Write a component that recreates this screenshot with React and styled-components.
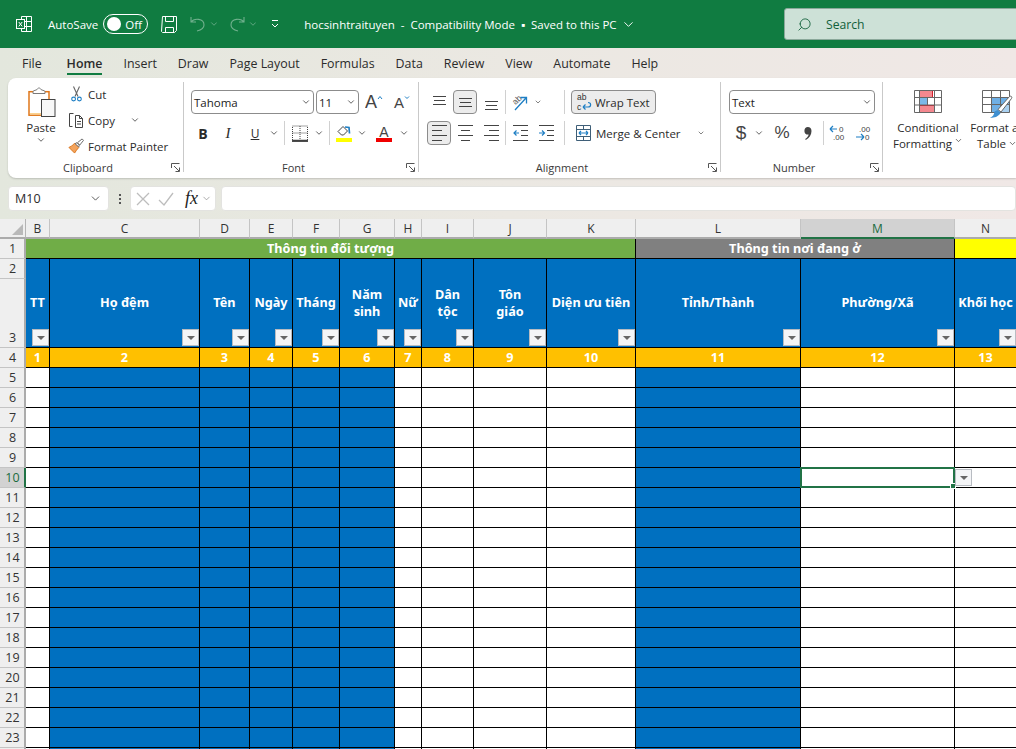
import React from 'react';
import styled, { createGlobalStyle } from 'styled-components';
import { ChevronDown, Search as SearchIcon } from 'lucide-react';

const UI_FONT = '"Open Sans", "Noto Sans", sans-serif';
const CELL_FONT = '"Noto Sans", "DejaVu Sans", sans-serif';
const ICON_FONT = '"Liberation Sans", sans-serif';
const BLUE = '#1f7fc4';

const Global = createGlobalStyle`
  html, body { margin: 0; padding: 0; height: 100%; overflow: hidden; }
  #root { height: 100%; }
`;

const Page = styled.div`
  width: 1016px;
  height: 749px;
  overflow: hidden;
  display: flex;
  flex-direction: column;
  font-family: ${UI_FONT};
  font-size: 12px;
  color: #2b2b2b;
  background: linear-gradient(90deg, #e3e7dd 0%, #ebe8e2 50%, #f0e8e6 100%);
`;

/* ---- title bar ---- */
const TitleBar = styled.div`
  height: 48px;
  flex: none;
  background: #107c41;
  color: #fff;
  display: flex;
  align-items: center;
  padding-left: 16px;
`;

const AutoSaveLabel = styled.span`
  margin-left: 16px;
  font-size: 11.5px;
`;

const Toggle = styled.div`
  margin-left: 5px;
  width: 45px;
  height: 20px;
  box-sizing: border-box;
  border: 1px solid #fff;
  border-radius: 10px;
  display: flex;
  align-items: center;
  gap: 4px;
  padding-left: 3px;
  font-size: 11.5px;
  &::before {
    content: '';
    width: 14px;
    height: 14px;
    border-radius: 50%;
    background: #fff;
  }
`;

const TitleIcon = styled.span`
  display: flex;
  align-items: center;
  gap: 3px;
  margin-left: ${({ $gap }) => $gap}px;
  opacity: ${({ $dim }) => ($dim ? 0.4 : 1)};
`;

const DocTitle = styled.span`
  margin-left: 24px;
  font-size: 11.5px;
  white-space: pre;
  display: flex;
  align-items: center;
  gap: 4px;
`;

const SearchBox = styled.div`
  margin-left: auto;
  width: 233px;
  height: 32px;
  box-sizing: border-box;
  margin-right: -1px;
  background: #cde1d7;
  border: 1px solid #8aa89a;
  border-radius: 3px 0 0 3px;
  display: flex;
  align-items: center;
  gap: 14px;
  padding-left: 12px;
  color: #11603a;
  font-size: 12.2px;
`;

/* ---- tabs ---- */
const Tabs = styled.div`
  height: 30px;
  flex: none;
  display: flex;
  align-items: center;
  padding-left: 22px;
  gap: 21px;
  font-size: 12.4px;
`;

const Tab = styled.span`
  position: relative;
  font-weight: ${({ $active }) => ($active ? 600 : 400)};
  &:first-child { margin-right: 4px; }
  ${({ $active }) =>
    $active &&
    `&::after {
      content: '';
      position: absolute;
      left: 0;
      right: 0;
      bottom: -3px;
      height: 2px;
      background: #107c41;
    }`}
`;

/* ---- ribbon ---- */
const Ribbon = styled.div`
  height: 100px;
  flex: none;
  margin-left: 8px;
  background: #fff;
  border-radius: 8px 0 0 8px;
  box-shadow: 0 1px 2px rgba(0, 0, 0, 0.18);
  display: flex;
  overflow: hidden;
`;

const Group = styled.div`
  position: relative;
  flex: none;
  width: ${({ $w }) => $w}px;
  box-sizing: border-box;
  padding-top: 6px;
  &::after {
    content: '';
    position: absolute;
    right: 0;
    top: 4px;
    bottom: 6px;
    width: 1px;
    background: ${({ $plain }) => ($plain ? 'transparent' : '#c9c9c9')};
  }
`;

const GroupBody = styled.div`
  height: 76px;
  display: flex;
  padding-left: ${({ $pad }) => $pad || 0}px;
`;

const GroupLabel = styled.div`
  text-align: center;
  font-size: 11px;
  line-height: 16px;
  color: #3a3a3a;
  padding-right: 16px;
`;

const Launcher = styled.svg`
  position: absolute;
  right: 4px;
  bottom: 6px;
`;

const PasteButton = styled.div`
  width: 44px;
  margin-left: 11px;
  display: flex;
  flex-direction: column;
  align-items: center;
  font-size: 11.5px;
  line-height: 15px;
  padding-top: 3px;
  svg:first-child { margin-bottom: 3px; }
`;

const ClipColumn = styled.div`
  margin-left: 5px;
  display: flex;
  flex-direction: column;
  gap: 6.2px;
`;

const ClipItem = styled.div`
  height: 20px;
  display: flex;
  align-items: center;
  gap: 4px;
  font-size: 11.5px;
  white-space: nowrap;
`;

const ClipGlyph = styled.span`
  width: 16px;
  display: flex;
  justify-content: center;
`;

const RowStack = styled.div`
  display: flex;
  flex-direction: column;
  gap: 5px;
  padding-top: 5px;
`;

const ToolRow = styled.div`
  height: 26px;
  display: flex;
  align-items: center;
  gap: ${({ $gap }) => $gap || 0}px;
`;

const Select = styled.div`
  width: ${({ $w }) => $w}px;
  height: 24px;
  box-sizing: border-box;
  border: 1px solid #8c8c8c;
  border-radius: 4px;
  display: flex;
  align-items: center;
  justify-content: space-between;
  padding: 0 2px;
  font-size: 11.5px;
  color: #222;
`;

const Tool = styled.div`
  width: ${({ $w }) => $w || 21}px;
  height: 24px;
  flex: none;
  box-sizing: border-box;
  display: flex;
  align-items: center;
  justify-content: center;
  border-radius: 4px;
  border: 1px solid ${({ $on }) => ($on ? '#8c8c8c' : 'transparent')};
  background: ${({ $on }) => ($on ? '#ececec' : 'transparent')};
  font-size: ${({ $size }) => $size || 13}px;
  font-weight: ${({ $bold }) => ($bold ? 700 : 400)};
  font-style: ${({ $italic }) => ($italic ? 'italic' : 'normal')};
  font-family: ${({ $serif, $sans }) =>
    $serif ? '"Liberation Serif", serif' : $sans ? ICON_FONT : 'inherit'};
  color: ${({ $sans }) => ($sans ? '#444' : 'inherit')};
`;

const Divider = styled.div`
  width: 1px;
  height: 24px;
  flex: none;
  background: #d0d0d0;
  margin-left: ${({ $l }) => $l || 0}px;
  margin-right: ${({ $r }) => $r || 0}px;
`;

const WideTool = styled(Tool)`
  justify-content: flex-start;
  gap: ${({ $inner }) => $inner}px;
  padding-left: 4px;
  font-size: 11.5px;
  white-space: nowrap;
`;

const Caret = styled.span`
  width: ${({ $w }) => $w}px;
  margin-left: ${({ $ml }) => $ml || 0}px;
  flex: none;
  display: flex;
  justify-content: center;
`;

const BigButton = styled.div`
  width: ${({ $w }) => $w}px;
  flex: none;
  display: flex;
  flex-direction: column;
  align-items: center;
  font-size: 11.5px;
  line-height: 16px;
  white-space: nowrap;
  padding-top: 6px;
  svg:first-child { margin-bottom: ${({ $iconGap }) => $iconGap}px; }
`;

const Caption = styled.span`
  display: flex;
  align-items: center;
  gap: 2px;
`;

/* ---- formula bar ---- */
const FormulaBar = styled.div`
  margin: 8px 0 8px 8px;
  height: 25px;
  flex: none;
  display: flex;
  align-items: stretch;
`;

const Box = styled.div`
  background: #fff;
  border-radius: 4px;
  display: flex;
  align-items: center;
  box-sizing: border-box;
  border: 1px solid #e3e3e0;
  font-size: 12.5px;
  width: ${({ $w }) => ($w ? `${$w}px` : 'auto')};
  padding: 0 ${({ $pad }) => $pad || 0}px;
  gap: ${({ $gap }) => $gap || 0}px;
  margin-left: ${({ $ml }) => $ml || 0}px;
  justify-content: ${({ $justify }) => $justify || 'flex-start'};
  flex: ${({ $w }) => ($w ? 'none' : 1)};
  svg { flex: none; }
`;

const Dots = styled.div`
  width: 21px;
  flex: none;
  display: flex;
  flex-direction: column;
  align-items: center;
  justify-content: center;
  gap: 2px;
  i {
    width: 2px;
    height: 2px;
    background: #555;
  }
`;

const Fx = styled.span`
  font-family: "Liberation Serif", serif;
  font-style: italic;
  font-size: 18px;
  color: #222;
  margin-left: 3px;
  margin-right: -5px;
`;

/* ---- sheet ---- */
const COLUMNS = [
  ['B', 24],
  ['C', 150],
  ['D', 50],
  ['E', 43],
  ['F', 47],
  ['G', 55],
  ['H', 27],
  ['I', 52],
  ['J', 73],
  ['K', 89],
  ['L', 165],
  ['M', 154],
  ['N', 62],
];

const HEADERS = [
  ['TT'],
  ['Họ đệm'],
  ['Tên'],
  ['Ngày'],
  ['Tháng'],
  ['Năm', 'sinh'],
  ['Nữ'],
  ['Dân', 'tộc'],
  ['Tôn', 'giáo'],
  ['Diện ưu tiên'],
  ['Tỉnh/Thành'],
  ['Phường/Xã'],
  ['Khối học'],
];

const BLUE_COLUMNS = ['C', 'D', 'E', 'F', 'G', 'L'];
const ROW_NUMBERS = Array.from({ length: 20 }, (_, i) => i + 5);
const LAST_VISIBLE_ROW = 23;

const Sheet = styled.div`
  display: grid;
  grid-template-columns: 26px ${COLUMNS.map(([, w]) => `${w}px`).join(' ')};
  grid-template-rows: 20px 20px 20px 69px 20px;
  grid-auto-rows: 20px;
  background: #fff;
  font-family: ${CELL_FONT};
  flex: none;
`;

const Corner = styled.div`
  background: #efefef;
  border-right: 1px solid #b4b4b4;
  border-bottom: 2px solid #ababab;
  box-sizing: border-box;
  display: flex;
  align-items: flex-end;
  justify-content: flex-end;
  padding: 0 2px 2px 0;
  &::after {
    content: '';
    border-style: solid;
    border-width: 0 0 11px 11px;
    border-color: transparent transparent #b9b9b9 transparent;
  }
`;

const ColHead = styled.div`
  box-sizing: border-box;
  background: ${({ $on }) => ($on ? '#d2d2d2' : '#efefef')};
  color: ${({ $on }) => ($on ? '#1a6b3f' : '#333')};
  border-right: 1px solid #c4c4c4;
  border-bottom: 2px solid ${({ $on }) => ($on ? '#217346' : '#ababab')};
  font-family: ${UI_FONT};
  font-size: 12px;
  display: flex;
  align-items: center;
  justify-content: center;
`;

const RowHead = styled.div`
  box-sizing: border-box;
  background: ${({ $on }) => ($on ? '#d2d2d2' : '#efefef')};
  color: ${({ $on }) => ($on ? '#1a6b3f' : '#333')};
  border-right: 2px solid ${({ $on }) => ($on ? '#217346' : '#ababab')};
  border-bottom: 1px solid #c4c4c4;
  font-family: ${UI_FONT};
  font-size: 12.5px;
  display: flex;
  align-items: ${({ $end }) => ($end ? 'flex-end' : 'center')};
  justify-content: center;
  padding: 0 0 ${({ $end }) => ($end ? 1 : 0)}px 1px;
`;

const BannerCell = styled.div`
  grid-column: ${({ $span }) => `span ${$span}`};
  box-sizing: border-box;
  background: ${({ $fill }) => $fill};
  border-right: 1px solid #000;
  border-bottom: 1px solid #000;
  color: #fff;
  font-size: 12.7px;
  font-weight: 700;
  display: flex;
  align-items: center;
  justify-content: center;
  padding-bottom: 2px;
`;

const HeaderCell = styled.div`
  grid-row: span 2;
  position: relative;
  box-sizing: border-box;
  background: #0070c0;
  border-right: 1px solid #000;
  border-bottom: 1px solid #000;
  color: #fff;
  font-size: 12.7px;
  font-weight: 700;
  line-height: 17px;
  text-align: center;
  white-space: nowrap;
  display: flex;
  flex-direction: column;
  justify-content: center;
  overflow: hidden;
  padding-bottom: 1px;
`;

const FilterButton = styled.span`
  position: absolute;
  right: 0;
  bottom: 1px;
  width: 17px;
  height: 17px;
  box-sizing: border-box;
  background: #f4f5f7;
  border: 1px solid #b8bcc2;
  display: flex;
  align-items: center;
  justify-content: center;
  &::after {
    content: '';
    border-style: solid;
    border-width: 4px 4px 0 4px;
    border-color: #666 transparent transparent transparent;
  }
`;

const IndexCell = styled.div`
  box-sizing: border-box;
  background: #ffc000;
  border-right: 1px solid #000;
  border-bottom: 1px solid #000;
  color: #fff;
  font-size: 12.7px;
  font-weight: 700;
  display: flex;
  align-items: center;
  justify-content: center;
  padding-bottom: 2px;
`;

const DataCell = styled.div`
  position: relative;
  box-sizing: border-box;
  background: ${({ $blue }) => ($blue ? '#0070c0' : '#fff')};
  border-right: 1px solid #000;
  border-bottom: 1px solid #000;
`;

const Selection = styled.span`
  position: absolute;
  left: -1px;
  top: -1px;
  right: -1px;
  bottom: -1px;
  border: 2px solid #217346;
  z-index: 2;
  &::after {
    content: '';
    position: absolute;
    right: -3px;
    bottom: -3px;
    width: 6px;
    height: 6px;
    background: #217346;
    border: 1px solid #fff;
    box-sizing: border-box;
  }
`;

const CellDropdown = styled(FilterButton)`
  right: auto;
  left: calc(100% + 1px);
  bottom: auto;
  top: 1px;
  z-index: 3;
`;

/* ---- icons ---- */
const Chev = ({ size = 10, color = '#444', stroke = 2 }) => (
  <ChevronDown size={size} color={color} strokeWidth={stroke} />
);

const ExcelLogo = () => (
  <svg width="16" height="16" viewBox="0 0 16 16" fill="none" stroke="#fff">
    <path d="M5.5 .5h10v15h-10v-3M5.5 3V.5M10.5 .5v15M5.5 5.5h10M5.5 10.5h10" />
    <rect x=".5" y="3.5" width="8" height="9" fill="#107c41" />
    <path d="M2.8 6l3.4 4.4M6.2 6l-3.4 4.4" />
  </svg>
);

const SaveIcon = () => (
  <svg width="17" height="17" viewBox="0 0 17 17" fill="none" stroke="#fff">
    <path d="M1.5 .5h14v14l-2 2h-12l-1-1z" />
    <path d="M4.5 .5v5h8v-5M4.5 16.5v-5h8v5" />
  </svg>
);

const UndoIcon = ({ flip }) => (
  <svg width="16" height="16" viewBox="0 0 16 16" fill="none" stroke="#fff" strokeWidth="1.1"
    style={flip ? { transform: 'scaleX(-1)' } : undefined}>
    <path d="M1 1v5h5M1 6c3-4 13-4 13 3 0 3-3 5-7 6" />
  </svg>
);

const QuickIcon = () => (
  <svg width="10" height="10" viewBox="0 0 10 10" fill="none" stroke="#fff">
    <path d="M2 1.5h6M2 5l3 3 3-3" />
  </svg>
);

const PasteIcon = () => (
  <svg width="29" height="30" viewBox="0 0 29 30">
    <rect x="2" y="4.7" width="20" height="23.5" fill="#fff" stroke="#e0771a" strokeWidth="1.5" />
    <path d="M3 26h18v1.5H3z" fill="#fbd28e" />
    <path d="M6 6.5V4.5c1-1.5 3-1 4-2 1-2 3-2 4 0 1 1 3 .5 4 2v2z" fill="#fff" stroke="#7a7a7a" />
    <rect x="14.5" y="12.5" width="13.5" height="17" fill="#f8f8f8" stroke="#444" />
  </svg>
);

const CutIcon = () => (
  <svg width="11" height="16" viewBox="0 0 11 16" fill="none" strokeWidth="1.1">
    <path d="M2.5 .5l4.5 10M8.5 .5l-4.5 10" stroke="#666" />
    <circle cx="2.6" cy="13" r="1.9" stroke={BLUE} />
    <circle cx="8.4" cy="13" r="1.9" stroke={BLUE} />
  </svg>
);

const CopyIcon = () => (
  <svg width="16" height="16" viewBox="0 0 16 16" fill="none" stroke="#444">
    <path d="M4.5 14.5h-3v-13h4M7.5 3.5h4l3 3v9h-7zM11.5 3.5v3h3M9 9.5h4M9 12h4" />
  </svg>
);

const PainterIcon = () => (
  <svg width="17" height="16" viewBox="0 0 17 16">
    <path d="M1 9.5l3-1.5 3-3 4.5 4.5-2.5 3-2 3z" fill="#f3a35c" stroke="#d9731a" />
    <path d="M7.5 5.500l2-1 2.5 2.500-.5 2zM10 4.500l5-4 1.500 1.500-4 5z" fill="#fff" stroke="#666" />
  </svg>
);

const BordersIcon = () => (
  <svg width="16" height="17" viewBox="0 0 16 17" fill="none" stroke="#444">
    <path d="M.5 1h15v14h-15zM8 1v14M.5 8h15" strokeDasharray="1 1" />
    <path d="M0 16h16" stroke="#111" strokeWidth="1.5" />
  </svg>
);

const FillIcon = () => (
  <svg width="16" height="18" viewBox="0 0 16 18" fill="none">
    <path d="M2 7.5l5-5 4.5 4.5-4 4h-2z" stroke="#444" fill="#fff" />
    <path d="M9 3l4 .5 .5 6" stroke={BLUE} strokeWidth="1.7" />
    <rect x="0" y="14" width="16" height="4" fill="#ffff00" />
  </svg>
);

const FontColorIcon = () => (
  <svg width="16" height="18" viewBox="0 0 16 18" overflow="visible">
    <text x="8" y="12.5" textAnchor="middle" fontFamily={ICON_FONT} fontSize="14" fill="#444">A</text>
    <rect x="0" y="14" width="16" height="4" fill="#f00000" />
  </svg>
);

const FontSizeIcon = ({ small }) => (
  <svg width="19" height="22" viewBox="0 0 19 22" fill="none">
    <text x={small ? 1 : 0} y="17" fontFamily={ICON_FONT} fontSize={small ? 15 : 18} fill="#444">A</text>
    <path d={small ? 'M12 5.5l2 2 2-2' : 'M13 8l2-2.500L17 8'} stroke={BLUE} />
  </svg>
);

const Lines = ({ rows, indent }) => (
  <svg width="15" height="16" viewBox="0 0 15 16" stroke="#444" fill="none">
    {rows.map(([y, x1, x2]) => (
      <path key={y} d={`M${x1} ${y}.5H${x2}`} />
    ))}
    {indent === 'out' && <path d="M6 8H1M3.5 5.500L1 8l2.500 2.500" stroke={BLUE} strokeWidth="1.2" />}
    {indent === 'in' && <path d="M0 8h5M3 5.500L5.500 8 3 10.500" stroke={BLUE} strokeWidth="1.2" />}
  </svg>
);

const ALIGN_TOP = [[2, 1, 14], [6, 2, 13], [10, 1, 14]];
const ALIGN_MID = [[4, 1, 14], [8, 2, 13], [12, 1, 14]];
const ALIGN_BOT = [[7, 1, 14], [11, 2, 13], [15, 1, 14]];
const ALIGN_LEFT = [[0, 0, 15], [5, 0, 10], [10, 0, 15], [15, 0, 10]];
const ALIGN_CENTER = [[0, 0, 15], [5, 3, 12], [10, 0, 15], [15, 3, 12]];
const ALIGN_RIGHT = [[0, 0, 15], [5, 5, 15], [10, 0, 15], [15, 5, 15]];
const INDENT_OUT = [[0, 0, 15], [5, 8, 15], [10, 8, 15], [15, 0, 15]];

const OrientIcon = () => (
  <svg width="20" height="20" viewBox="0 0 20 20" fill="none">
    <text x="3" y="11" fontFamily={ICON_FONT} fontSize="8.5" fill="#555" transform="rotate(-45 7 9)">ab</text>
    <path d="M5 18L16 6M10.500 5.500H16.500V11.500" stroke={BLUE} strokeWidth="1.3" />
  </svg>
);

const WrapIcon = () => (
  <svg width="16" height="20" viewBox="0 0 16 20" fill="none">
    <text x="1" y="8" fontFamily={ICON_FONT} fontSize="8.5" fill="#333">ab</text>
    <text x="1" y="17.5" fontFamily={ICON_FONT} fontSize="8.5" fill="#333">c</text>
    <path d="M7 15h5c3.500 0 3.500-4.500 0-4.500M7 15l2.500-2.500M7 15l2.500 2.500" stroke={BLUE} strokeWidth="1.2" />
  </svg>
);

const MergeIcon = () => (
  <svg width="15" height="16" viewBox="0 0 15 16" fill="none">
    <path d="M.5 .5h14v15H.5zM.5 4.500h14M.5 11.500h14M7.500 11.500v4M7.500 .5v4" stroke="#3f5f78" />
    <path d="M3 8h9M3 8l2-2M3 8l2 2M12 8l-2-2M12 8l-2 2" stroke={BLUE} strokeWidth="1.2" />
  </svg>
);

const DecimalIcon = ({ more }) => (
  <svg width="16" height="18" viewBox="0 0 16 18" fill="none">
    {more ? (
      <>
        <path d="M1 5h7M1 5l3-3M1 5l3 3" stroke={BLUE} strokeWidth="1.2" />
        <text x="10" y="8" fontFamily={ICON_FONT} fontSize="8" fill="#444">0</text>
        <text x="4" y="16" fontFamily={ICON_FONT} fontSize="8" fill="#444">.00</text>
      </>
    ) : (
      <>
        <text x="4" y="8" fontFamily={ICON_FONT} fontSize="8" fill="#444">.00</text>
        <path d="M1 13h8M9 13l-3-3M9 13l-3 3" stroke={BLUE} strokeWidth="1.2" />
        <text x="10" y="16" fontFamily={ICON_FONT} fontSize="8" fill="#444">0</text>
      </>
    )}
  </svg>
);

const CommaIcon = () => (
  <svg width="8" height="13" viewBox="0 0 8 13">
    <path d="M3.8 0C6 0 7.500 1.600 7.500 4c0 3.800-2.200 7-5.700 9l-.6-.9C3.300 10.600 4.400 9.200 4.600 7.500 2.300 7.900 .4 6.300 .4 3.900.4 1.600 1.800 0 3.800 0z" fill="#444" />
  </svg>
);

const CondFormatIcon = () => (
  <svg width="28" height="23" viewBox="0 0 28 23">
    <rect x=".5" y=".5" width="27" height="22" fill="#fff" />
    <rect x="5.5" y=".5" width="13" height="7" fill="#f4888f" stroke="#d0202c" />
    <rect x="5.5" y="8" width="8" height="7" fill="#7bb8e8" />
    <rect x="5.5" y="15.5" width="15" height="7" fill="#f4888f" stroke="#d0202c" />
    <path d="M.5 .5h27v22H.5zM5.500 0v23M13.500 8v7M20.500 0v23M0 7.500h28M0 15h28" stroke="#666" fill="none" />
  </svg>
);

const FormatTableIcon = () => (
  <svg width="31" height="28" viewBox="0 0 31 28">
    <rect x=".5" y=".5" width="27" height="22" fill="#fff" />
    <rect x="9.5" y="7.5" width="18" height="15" fill="#6fb0e6" />
    <rect x="18.5" y="14.5" width="9" height="8" fill="#a9d0f0" />
    <path d="M.5 .5h27v22H.5zM9.500 0v23M18.500 0v23M0 7.500h28M0 14.500h28" stroke="#666" fill="none" />
    <path d="M8 27.500c3-.5 4-3 4.500-6l3-1.500 3 3c-1.500 3-6 5.500-10.500 4.500z" fill="#3d8fd1" />
    <path d="M16 19.500L27.500 6.500c1.500-1 3 .5 2 2L19 22z" fill="#fff" stroke="#666" />
  </svg>
);

const LauncherIcon = () => (
  <Launcher width="9" height="9" viewBox="0 0 9 9" fill="none" stroke="#555">
    <path d="M.5 5V.5H8.500M3 3l5 5M8.500 4.500v4H4.500" />
  </Launcher>
);

const XIcon = () => (
  <svg width="14" height="14" viewBox="0 0 14 14" stroke="#bdbdbd" strokeWidth="1.3" fill="none">
    <path d="M1 1l12 12M13 1L1 13" />
  </svg>
);

const CheckIcon = () => (
  <svg width="16" height="14" viewBox="0 0 16 14" stroke="#bdbdbd" strokeWidth="1.3" fill="none">
    <path d="M1 8l5 5L15 1" />
  </svg>
);

const TABS = ['File', 'Home', 'Insert', 'Draw', 'Page Layout', 'Formulas', 'Data', 'Review', 'View', 'Automate', 'Help'];

function SheetGrid() {
  return (
    <Sheet>
      <Corner />
      {COLUMNS.map(([name]) => (
        <ColHead key={name} $on={name === 'M'}>{name}</ColHead>
      ))}

      <RowHead>1</RowHead>
      <BannerCell $span={10} $fill="#70ad47">Thông tin đối tượng</BannerCell>
      <BannerCell $span={2} $fill="#808080">Thông tin nơi đang ở</BannerCell>
      <BannerCell $span={1} $fill="#ffff00" />

      <RowHead>2</RowHead>
      {HEADERS.map((lines, i) => (
        <HeaderCell key={i}>
          {lines.map((line) => <div key={line}>{line}</div>)}
          <FilterButton />
        </HeaderCell>
      ))}
      <RowHead $end>3</RowHead>

      <RowHead>4</RowHead>
      {COLUMNS.map(([name], i) => <IndexCell key={name}>{i + 1}</IndexCell>)}

      {ROW_NUMBERS.map((row) => (
        <React.Fragment key={row}>
          {/* the last row only peeks in by a pixel, its number is out of view */}
          <RowHead $on={row === 10}>{row <= LAST_VISIBLE_ROW && row}</RowHead>
          {COLUMNS.map(([name]) => (
            <DataCell key={name} $blue={BLUE_COLUMNS.includes(name)}>
              {row === 10 && name === 'M' && (
                <>
                  <Selection />
                  <CellDropdown />
                </>
              )}
            </DataCell>
          ))}
        </React.Fragment>
      ))}
    </Sheet>
  );
}

export default function App() {
  return (
    <Page>
      <Global />
      <TitleBar>
        <ExcelLogo />
        <AutoSaveLabel>AutoSave</AutoSaveLabel>
        <Toggle>Off</Toggle>
        <TitleIcon $gap={13}><SaveIcon /></TitleIcon>
        <TitleIcon $gap={12} $dim><UndoIcon /><Chev color="#fff" /></TitleIcon>
        <TitleIcon $gap={10} $dim><UndoIcon flip /><Chev color="#fff" /></TitleIcon>
        <TitleIcon $gap={12}><QuickIcon /></TitleIcon>
        <DocTitle>hocsinhtraituyen  -  Compatibility Mode  ▪  Saved to this PC<Chev size={15} color="#fff" stroke={1.5} /></DocTitle>
        <SearchBox>
          <SearchIcon size={15} color="#11603a" strokeWidth={1.4} style={{ transform: 'scaleX(-1)' }} />
          Search
        </SearchBox>
      </TitleBar>

      <Tabs>
        {TABS.map((t) => <Tab key={t} $active={t === 'Home'}>{t}</Tab>)}
      </Tabs>

      <Ribbon>
        <Group $w={176}>
          <GroupBody>
            <PasteButton>
              <PasteIcon />
              Paste
              <Chev />
            </PasteButton>
            <ClipColumn>
              <ClipItem><ClipGlyph><CutIcon /></ClipGlyph> Cut</ClipItem>
              <ClipItem><ClipGlyph><CopyIcon /></ClipGlyph> Copy <Caret $w={10} $ml={11}><Chev /></Caret></ClipItem>
              <ClipItem><ClipGlyph><PainterIcon /></ClipGlyph> Format Painter</ClipItem>
            </ClipColumn>
          </GroupBody>
          <GroupLabel>Clipboard</GroupLabel>
          <LauncherIcon />
        </Group>

        <Group $w={235}>
          <GroupBody $pad={7}>
            <RowStack>
              <ToolRow $gap={2}>
                <Select $w={123}>Tahoma <Chev /></Select>
                <Select $w={43}>11 <Chev /></Select>
                <Tool $w={26}><FontSizeIcon /></Tool>
                <Tool $w={26}><FontSizeIcon small /></Tool>
              </ToolRow>
              <ToolRow>
                <Tool $bold $w={24} $size={14}>B</Tool>
                <Tool $italic $serif $w={26} $size={15}>I</Tool>
                <Tool $w={28} $size={12}><u>U</u></Tool>
                <Caret $w={10}><Chev /></Caret>
                <Divider $l={5} $r={4} />
                <Tool $w={22}><BordersIcon /></Tool>
                <Caret $w={16}><Chev /></Caret>
                <Divider $l={2} $r={3} />
                <Tool><FillIcon /></Tool>
                <Caret $w={15}><Chev /></Caret>
                <Tool $w={30}><FontColorIcon /></Tool>
                <Caret $w={10}><Chev /></Caret>
              </ToolRow>
            </RowStack>
          </GroupBody>
          <GroupLabel>Font</GroupLabel>
          <LauncherIcon />
        </Group>

        <Group $w={302}>
          <GroupBody $pad={8}>
            <RowStack>
              <ToolRow $gap={2}>
                <Tool $w={24}><Lines rows={ALIGN_TOP} /></Tool>
                <Tool $on $w={24}><Lines rows={ALIGN_MID} /></Tool>
                <Tool $w={24}><Lines rows={ALIGN_BOT} /></Tool>
                <Divider />
                <Tool $w={24}><OrientIcon /></Tool>
                <Caret $w={8}><Chev /></Caret>
                <Divider $l={20} $r={4} />
                <WideTool $on $w={85} $inner={3}><WrapIcon /> Wrap Text</WideTool>
              </ToolRow>
              <ToolRow $gap={2}>
                <Tool $on $w={24}><Lines rows={ALIGN_LEFT} /></Tool>
                <Tool $w={24}><Lines rows={ALIGN_CENTER} /></Tool>
                <Tool $w={24}><Lines rows={ALIGN_RIGHT} /></Tool>
                <Divider />
                <Tool $w={24}><Lines rows={INDENT_OUT} indent="out" /></Tool>
                <Tool $w={24}><Lines rows={INDENT_OUT} indent="in" /></Tool>
                <Divider $l={4} $r={4} />
                <WideTool $w={124} $inner={5}><MergeIcon /> Merge &amp; Center</WideTool>
                <Caret $w={8}><Chev /></Caret>
              </ToolRow>
            </RowStack>
          </GroupBody>
          <GroupLabel>Alignment</GroupLabel>
          <LauncherIcon />
        </Group>

        <Group $w={162}>
          <GroupBody $pad={8}>
            <RowStack>
              <ToolRow>
                <Select $w={146}>Text <Chev /></Select>
              </ToolRow>
              <ToolRow>
                <Tool $w={24} $size={19} $sans>$</Tool>
                <Caret $w={12}><Chev /></Caret>
                <Tool $w={34} $size={17} $sans>%</Tool>
                <Tool $w={18}><CommaIcon /></Tool>
                <Divider $l={6} />
                <Tool $w={26}><DecimalIcon more /></Tool>
                <Tool $w={26}><DecimalIcon /></Tool>
              </ToolRow>
            </RowStack>
          </GroupBody>
          <GroupLabel>Number</GroupLabel>
          <LauncherIcon />
        </Group>

        <Group $w={140} $plain>
          <GroupBody $pad={6}>
            <BigButton $w={78} $iconGap={7}>
              <CondFormatIcon />
              Conditional
              <Caption>Formatting <Chev size={9} /></Caption>
            </BigButton>
            <BigButton $w={60} $iconGap={2}>
              <FormatTableIcon />
              Format as
              <Caption>Table <Chev size={9} /></Caption>
            </BigButton>
          </GroupBody>
        </Group>
      </Ribbon>

      <FormulaBar>
        <Box $w={101} $pad={6} $justify="space-between">M10 <Chev size={13} stroke={1.6} /></Box>
        <Dots><i /><i /><i /></Dots>
        <Box $w={86} $pad={5} $gap={8}>
          <XIcon />
          <CheckIcon />
          <Fx>fx</Fx>
          <Chev size={11} color="#888" stroke={1.5} />
        </Box>
        <Box $ml={5} />
      </FormulaBar>

      <SheetGrid />
    </Page>
  );
}
